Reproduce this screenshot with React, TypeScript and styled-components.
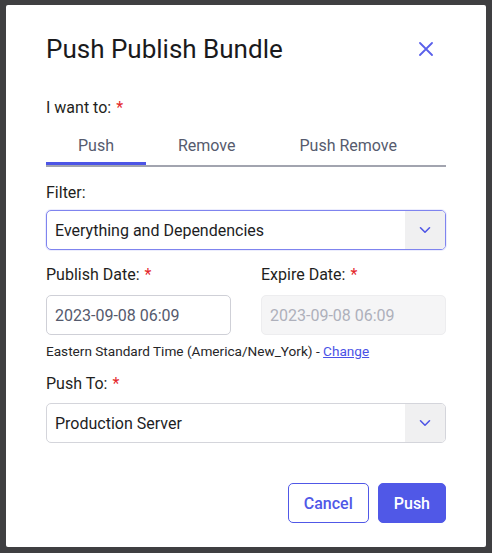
import React, { useState } from 'react';
import { styled, createGlobalStyle } from 'styled-components';

const GlobalStyle = createGlobalStyle`
  html, body {
    margin: 0;
    padding: 0;
    background: #3f3f41;
  }
  body {
    font-family: Roboto, 'Liberation Sans', sans-serif;
    color: #1d1d1f;
  }
  * {
    box-sizing: border-box;
  }
`;

const Backdrop = styled.div`
  width: 492px;
  height: 553px;
  padding: 5px 6px 0;
  background: #3f3f41;
`;

const Dialog = styled.div`
  width: 480px;
  height: 542px;
  background: #ffffff;
  border-radius: 2px;
  padding: 28px 40px 24px;
  display: flex;
  flex-direction: column;
`;

const Header = styled.div`
  display: flex;
  align-items: center;
  justify-content: space-between;
  margin-bottom: 33px;
`;

const Title = styled.h2`
  margin: 0;
  font-size: 26px;
  line-height: 32px;
  font-weight: 400;
  color: #1a1a1c;
`;

const CloseButton = styled.button`
  border: none;
  background: none;
  padding: 0;
  margin-right: 13px;
  width: 14px;
  height: 14px;
  display: flex;
  cursor: pointer;
  color: #5a60ea;
`;

const Label = styled.label<{ $gap?: number }>`
  display: block;
  font-size: 16px;
  line-height: 20px;
  color: #1f1f21;
  margin-bottom: ${(p) => p.$gap ?? 8}px;
`;

const Required = styled.span`
  color: #e4262b;
  margin-left: 5px;
`;

const TabList = styled.div`
  display: flex;
  border-bottom: 2px solid #a2a4af;
  margin-bottom: 16px;
`;

const Tab = styled.button<{ $active?: boolean }>`
  border: none;
  background: none;
  font-family: inherit;
  font-size: 16px;
  line-height: 20px;
  color: #565b6e;
  padding: 8px 32px 6px;
  border-bottom: 3px solid ${(p) => (p.$active ? '#4d55e6' : 'transparent')};
  cursor: pointer;
`;

const SelectBox = styled.div<{ $focused?: boolean }>`
  display: flex;
  height: 40px;
  border: 1px solid ${(p) => (p.$focused ? '#7f84ef' : '#d4d5db')};
  border-radius: 5px;
  overflow: hidden;
  background: #fff;
  box-shadow: ${(p) => (p.$focused ? '0 0 0 1px rgba(127,132,239,0.15)' : 'none')};
`;

const SelectValue = styled.div`
  flex: 1;
  display: flex;
  align-items: center;
  padding-left: 8px;
  font-size: 16px;
  color: #1d1d1f;
`;

const SelectArrow = styled.div`
  width: 40px;
  background: #f0f0f1;
  display: flex;
  align-items: center;
  justify-content: center;
  color: #5057e6;
`;

const DateGrid = styled.div`
  display: grid;
  grid-template-columns: 1fr 1fr;
  column-gap: 30px;
  margin-top: 15px;
`;

const DateInput = styled.div<{ $disabled?: boolean }>`
  height: 40px;
  border: 1px solid ${(p) => (p.$disabled ? '#ededef' : '#cfd0d7')};
  background: ${(p) => (p.$disabled ? '#f5f5f6' : '#fff')};
  color: ${(p) => (p.$disabled ? '#aeb0bb' : '#555a6d')};
  border-radius: 5px;
  display: flex;
  align-items: center;
  padding-left: 8px;
  font-size: 16px;
`;

const TimeZone = styled.div`
  margin-top: 8px;
  font-size: 13.6px;
  line-height: 16px;
  color: #262628;
  margin-bottom: 15px;
`;

const Link = styled.a`
  color: #4a52e6;
  text-decoration: underline;
  cursor: pointer;
`;

const Footer = styled.div`
  margin-top: auto;
  display: flex;
  justify-content: flex-end;
  gap: 9px;
`;

const Button = styled.button<{ $primary?: boolean }>`
  height: 40px;
  padding: 0 15px;
  border-radius: 5px;
  border: 1px solid #5058e7;
  background: ${(p) => (p.$primary ? '#5058e7' : '#fff')};
  color: ${(p) => (p.$primary ? '#fff' : '#5058e7')};
  font-family: inherit;
  font-size: 16px;
  font-weight: 500;
  cursor: pointer;
`;

const Chevron = () => (
  <svg width="12" height="8" viewBox="0 0 12 8" fill="none">
    <path d="M1.5 1.8 6 6.2l4.5-4.4" stroke="currentColor" strokeWidth="1.6" strokeLinecap="round" strokeLinejoin="round" />
  </svg>
);

const tabs = ['Push', 'Remove', 'Push Remove'];

export default function App() {
  const [active, setActive] = useState(0);

  return (
    <>
      <GlobalStyle />
      <Backdrop>
        <Dialog>
          <Header>
            <Title>Push Publish Bundle</Title>
            <CloseButton aria-label="Close">
              <svg width="14" height="14" viewBox="0 0 14 14">
                <path d="M1 1l12 12M13 1L1 13" stroke="currentColor" strokeWidth="1.8" strokeLinecap="round" />
              </svg>
            </CloseButton>
          </Header>

          <Label $gap={10}>
            I want to:<Required>*</Required>
          </Label>
          <TabList>
            {tabs.map((t, i) => (
              <Tab key={t} $active={i === active} onClick={() => setActive(i)}>
                {t}
              </Tab>
            ))}
          </TabList>

          <Label $gap={7}>Filter:</Label>
          <SelectBox $focused>
            <SelectValue>Everything and Dependencies</SelectValue>
            <SelectArrow>
              <Chevron />
            </SelectArrow>
          </SelectBox>

          <DateGrid>
            <div>
              <Label $gap={10}>
                Publish Date:<Required>*</Required>
              </Label>
              <DateInput>2023-09-08 06:09</DateInput>
            </div>
            <div>
              <Label $gap={10}>
                Expire Date:<Required>*</Required>
              </Label>
              <DateInput $disabled>2023-09-08 06:09</DateInput>
            </div>
          </DateGrid>

          <TimeZone>
            Eastern Standard Time (America/New_York) - <Link>Change</Link>
          </TimeZone>

          <Label $gap={9}>
            Push To:<Required>*</Required>
          </Label>
          <SelectBox>
            <SelectValue>Production Server</SelectValue>
            <SelectArrow>
              <Chevron />
            </SelectArrow>
          </SelectBox>

          <Footer>
            <Button>Cancel</Button>
            <Button $primary>Push</Button>
          </Footer>
        </Dialog>
      </Backdrop>
    </>
  );
}
